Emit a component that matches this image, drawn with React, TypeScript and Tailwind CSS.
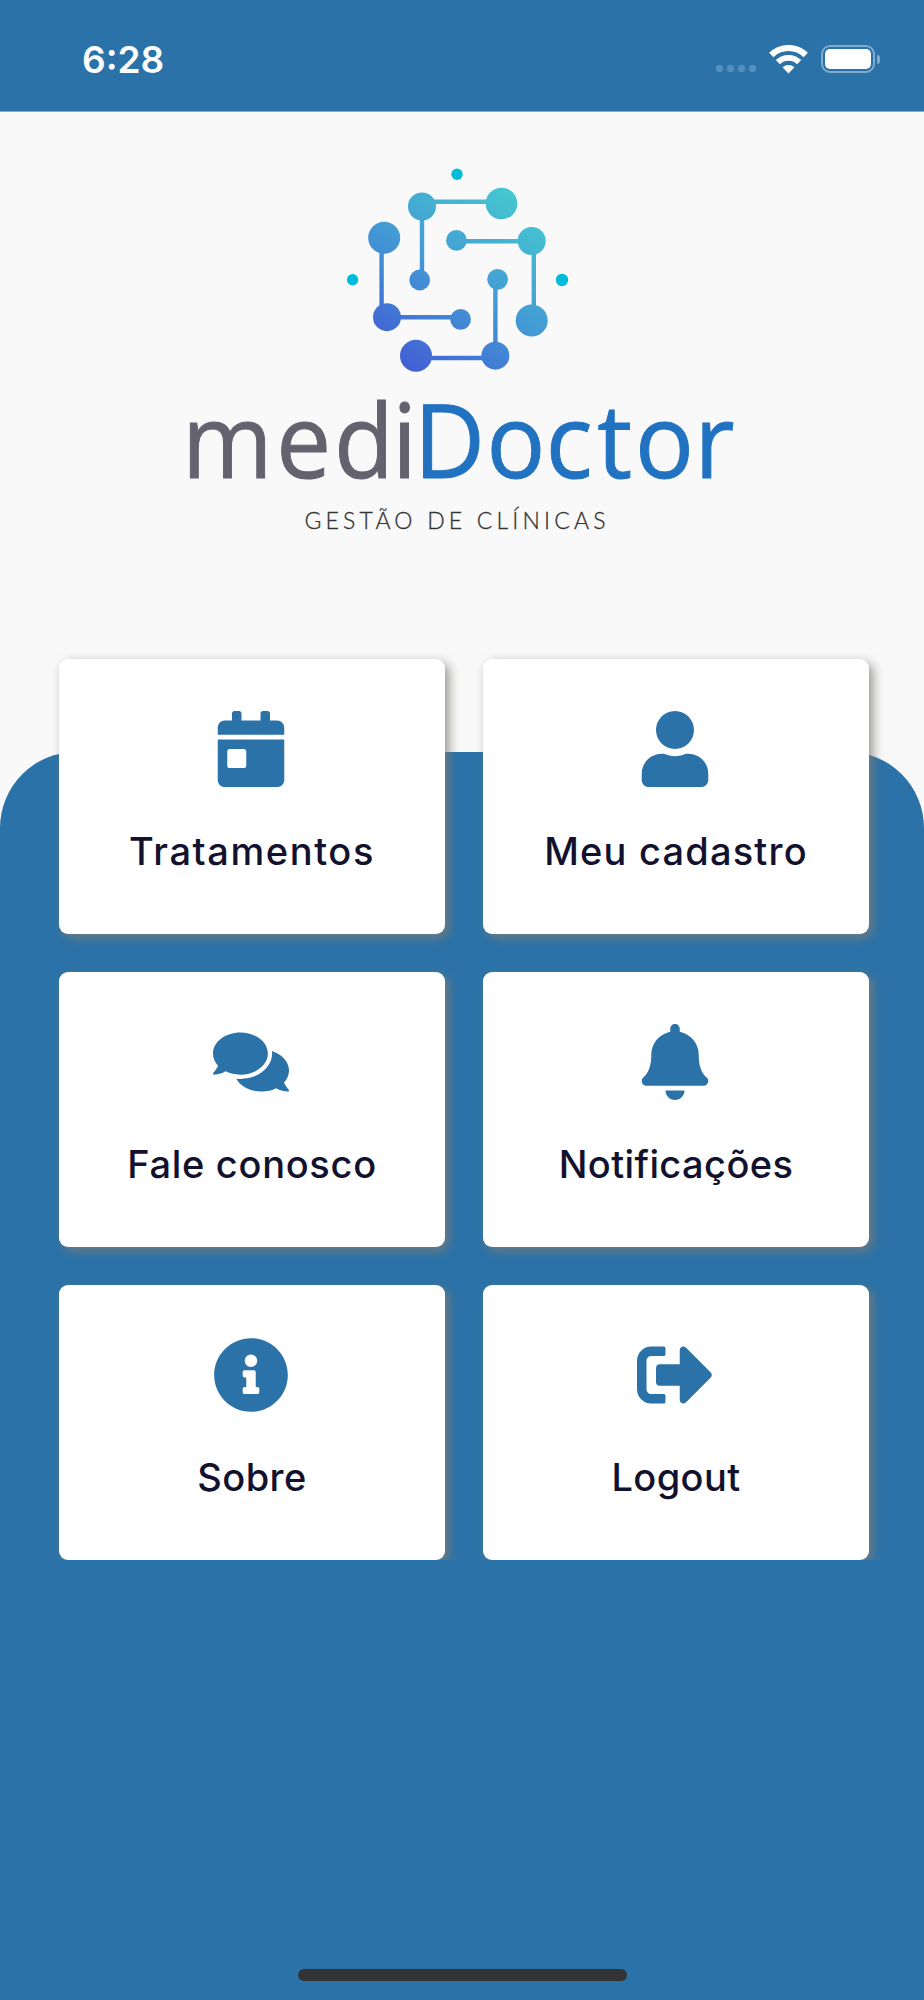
import type { IconType } from "react-icons";
import { FaBell, FaCalendarDay, FaComments, FaInfoCircle, FaSignOutAlt, FaUser } from "react-icons/fa";

type MenuItem = {
  label: string;
  icon: IconType;
  tracking: string;
};

const menuItems: MenuItem[] = [
  { label: "Tratamentos", icon: FaCalendarDay, tracking: "tracking-[1.6px]" },
  { label: "Meu cadastro", icon: FaUser, tracking: "tracking-[1.2px]" },
  { label: "Fale conosco", icon: FaComments, tracking: "tracking-[0.7px]" },
  { label: "Notificações", icon: FaBell, tracking: "tracking-[0.4px]" },
  { label: "Sobre", icon: FaInfoCircle, tracking: "tracking-[0.4px]" },
  { label: "Logout", icon: FaSignOutAlt, tracking: "tracking-[0.4px]" },
];

const StatusBar = () => {
  return (
    <header className="h-[112px] shrink-0 bg-[#2a72a8] border-b border-[#7fabcc] flex items-start justify-between pl-[82px] pr-[44px] pt-[36px]">
      <span className="text-white text-[37px] leading-[48px] font-semibold">6:28</span>
      <div className="flex items-center gap-[13px] h-[46px]">
        <div className="flex gap-1 pt-[18px]">
          <span className="w-[7px] h-[7px] rounded-[3px] bg-[#5590bd]"></span>
          <span className="w-[7px] h-[7px] rounded-[3px] bg-[#5590bd]"></span>
          <span className="w-[7px] h-[7px] rounded-[3px] bg-[#5590bd]"></span>
          <span className="w-[7px] h-[7px] rounded-[3px] bg-[#5590bd]"></span>
        </div>
        <svg className="w-[39px] h-[29px]" viewBox="0 0 38 28" fill="none">
          <path d="M2.2 9.6a24.2 24.2 0 0 1 33.6 0" stroke="#fff" strokeWidth="6" />
          <path d="M8.6 16.6a15 15 0 0 1 20.8 0" stroke="#fff" strokeWidth="5.8" />
          <path d="M13.2 21.6a8.4 8.4 0 0 1 11.6 0L19 27.6z" fill="#fff" />
        </svg>
        <div className="flex items-center gap-[2px]">
          <div className="w-[54px] h-[28px] rounded-[9px] border-2 border-[#7fabcc] p-[2px]">
            <div className="h-full rounded-[5px] bg-white"></div>
          </div>
          <div className="w-[3px] h-[9px] rounded-r-full bg-[#7fabcc]"></div>
        </div>
      </div>
    </header>
  );
};

const Logo = () => {
  return (
    <svg className="w-[600px] h-[400px]" viewBox="162 150 600 400" role="img" aria-label="mediDoctor">
      <defs>
        <linearGradient id="mark" gradientUnits="userSpaceOnUse" x1="400" y1="372" x2="520" y2="195">
          <stop offset="0" stopColor="#425bd4" />
          <stop offset="0.5" stopColor="#4399d4" />
          <stop offset="1" stopColor="#45c8d0" />
        </linearGradient>
      </defs>
      <g fill="none" stroke="url(#mark)" strokeWidth="4.4">
        <path d="M501 201.7H422V280" />
        <path d="M456 241.3H533.8V320" />
        <path d="M381.6 238V317.3H460" />
        <path d="M495.4 280V358H416" />
      </g>
      <g fill="url(#mark)">
        <circle cx="501.5" cy="203.5" r="15.8" />
        <circle cx="422" cy="206.5" r="14" />
        <circle cx="419.7" cy="280" r="10.4" />
        <circle cx="384.2" cy="237.8" r="16" />
        <circle cx="387" cy="317.2" r="14" />
        <circle cx="460.6" cy="319.4" r="10.4" />
        <circle cx="456.5" cy="240.4" r="10.4" />
        <circle cx="531.7" cy="241" r="14" />
        <circle cx="531.7" cy="320.5" r="16" />
        <circle cx="497.6" cy="279.3" r="10.4" />
        <circle cx="495.4" cy="355.7" r="14" />
        <circle cx="416" cy="355.8" r="16" />
      </g>
      <g fill="#00bcd8">
        <circle cx="457" cy="174.3" r="5.7" />
        <circle cx="352.6" cy="279.7" r="5.7" />
        <circle cx="562" cy="280" r="6.2" />
      </g>
      {/* slightly narrowed letterforms, each glyph placed on its own */}
      <g transform="scale(0.95 1)" fontFamily="'Open Sans', sans-serif" fontSize="103" strokeWidth="1">
        <text x="191.5 290.8 351.5 413" y="478" fill="#65626f" stroke="#65626f">medi</text>
        <text x="435.8 512 574.5 628.6 668.5 731" y="478" fill="#2272c2" stroke="#2272c2">Doctor</text>
      </g>
      <text
        x="304.5"
        y="529"
        textLength="301"
        fill="#333"
        stroke="#333"
        strokeWidth="0.3"
        fontFamily="Lato, sans-serif"
        fontWeight="300"
        fontSize="23"
      >
        GESTÃO DE CLÍNICAS
      </text>
    </svg>
  );
};

const MenuCard = ({ label, icon: Icon, tracking }: MenuItem) => {
  return (
    <button className="h-[275px] rounded-[9px] bg-white shadow-[4px_4px_11px_rgba(128,125,120,0.8)] flex flex-col items-center pt-[52px]">
      <Icon className="size-[76px] mr-[3px] text-[#2a72a8]" />
      <span className={`mt-[40px] text-[38px] leading-[48px] font-medium text-[#12122e] whitespace-nowrap ${tracking}`}>
        {label}
      </span>
    </button>
  );
};

export default function App() {
  return (
    <div className="w-[924px] h-[2000px] bg-[#f9f9f9] flex flex-col overflow-hidden font-['Inter',sans-serif]">
      <StatusBar />
      <section className="h-[640px] shrink-0 flex flex-col items-center pt-[38px]">
        <Logo />
      </section>
      <main className="flex-1 bg-[#2a72a8] rounded-t-[76px] flex flex-col items-center">
        <div className="w-full -mt-[113px] pt-5 pl-[59px] pr-[55px] grid grid-cols-2 gap-[38px] overflow-hidden">
          {menuItems.map((item) => (
            <MenuCard key={item.label} {...item} />
          ))}
        </div>
        <div className="mt-auto mb-[19px] w-[329px] h-[12px] rounded-full bg-[#333]"></div>
      </main>
    </div>
  );
}
